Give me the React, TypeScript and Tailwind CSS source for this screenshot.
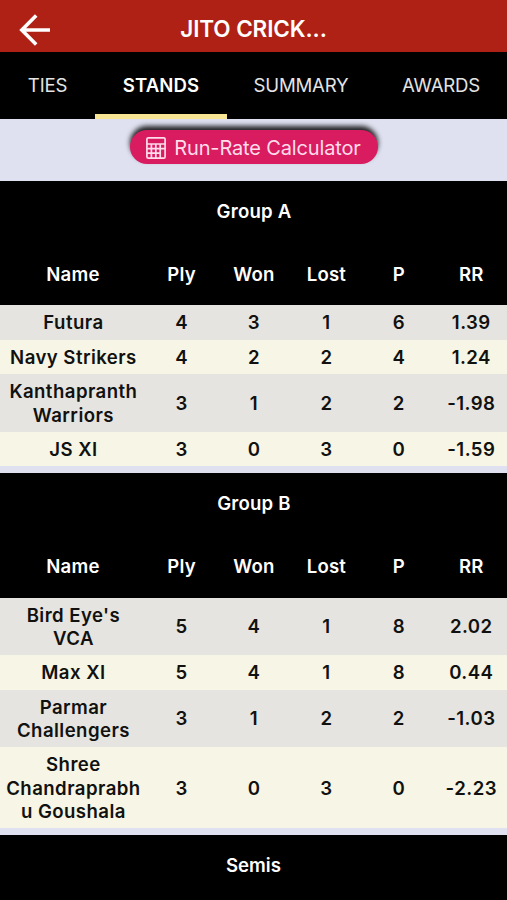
import clsx from 'clsx'

interface Team {
  name: string
  stats: string[]
}

interface Group {
  title: string
  teams: Team[]
}

const TABS = [
  { label: 'TIES', width: 'w-[95px]' },
  { label: 'STANDS', width: 'w-[132px]' },
  { label: 'SUMMARY', width: 'w-[148px]' },
  { label: 'AWARDS', width: 'w-[132px]' },
]

const COLUMNS = ['Name', 'Ply', 'Won', 'Lost', 'P', 'RR']

const GROUPS: Group[] = [
  {
    title: 'Group A',
    teams: [
      { name: 'Futura', stats: ['4', '3', '1', '6', '1.39'] },
      { name: 'Navy Strikers', stats: ['4', '2', '2', '4', '1.24'] },
      { name: 'Kanthapranth Warriors', stats: ['3', '1', '2', '2', '-1.98'] },
      { name: 'JS XI', stats: ['3', '0', '3', '0', '-1.59'] },
    ],
  },
  {
    title: 'Group B',
    teams: [
      { name: "Bird Eye's VCA", stats: ['5', '4', '1', '8', '2.02'] },
      { name: 'Max XI', stats: ['5', '4', '1', '8', '0.44'] },
      { name: 'Parmar Challengers', stats: ['3', '1', '2', '2', '-1.03'] },
      { name: 'Shree Chandraprabhu Goushala', stats: ['3', '0', '3', '0', '-2.23'] },
    ],
  },
]

function BackIcon() {
  return (
    <svg width="32" height="32" viewBox="0 0 32 32" fill="none" stroke="white" strokeWidth="3.6">
      <path d="M31 16H4M17.2 1.6L2.8 16l14.4 14.4" />
    </svg>
  )
}

function CalculatorIcon() {
  return (
    <svg width="20" height="22" viewBox="0 0 20 22" fill="none" stroke="currentColor" strokeWidth="1.7">
      <rect x="0.9" y="0.9" width="18.2" height="20.2" rx="1.4" />
      <path d="M1 7h18M1 11.6h18M1 16.2h13M5.4 7v14M9.8 7v14M14.2 7v14" />
    </svg>
  )
}

function GroupTable({ group }: { group: Group }) {
  return (
    <section className="mb-[6.9px]">
      <div className="bg-black text-white tracking-[0.2px]">
        <h2 className="h-[61px] pl-px leading-[61px] text-center">{group.title}</h2>
        <div className="grid grid-cols-[2fr_1fr_1fr_1fr_1fr_1fr] h-[63.4px] items-center pt-[1.5px] text-center">
          {COLUMNS.map(col => <div key={col} className="pl-px">{col}</div>)}
        </div>
      </div>
      {group.teams.map((team, i) => (
        <div key={team.name}
          className={clsx('grid grid-cols-[2fr_1fr_1fr_1fr_1fr_1fr] items-center pt-[6.1px] pb-[5.3px] text-center leading-[23.1px] tracking-[0.45px] text-[#11110f]', i % 2 ? 'bg-[#f7f5e5]' : 'bg-[#e5e4e0]')}>
          <div className="min-w-0 pl-[5px] pr-[3px] break-words">{team.name}</div>
          {team.stats.map((value, j) => <div key={j} className="pl-px">{value}</div>)}
        </div>
      ))}
    </section>
  )
}

export default function App() {
  return (
    <div className="h-[900px] overflow-hidden bg-[#dfe1f0] font-['Inter',sans-serif] text-[18.6px] font-semibold">
      <header className="grid grid-cols-[52px_1fr_52px] h-[52px] items-center bg-[#af2115] text-white">
        <button type="button" aria-label="Back" className="mt-2 ml-[19px]">
          <BackIcon />
        </button>
        <h1 className="mt-1.5 text-center text-[22.5px] tracking-[-0.1px]">JITO CRICK...</h1>
      </header>

      <nav className="flex h-[67px] bg-black">
        {TABS.map(tab => (
          <button type="button" key={tab.label}
            className={clsx('h-full border-b-[5px] pt-1.5 text-center', tab.width, tab.label === 'STANDS' ? 'border-[#f7e593] font-semibold text-white tracking-[0.1px]' : 'border-transparent font-normal text-[#e4e4e4] tracking-[-0.2px]')}>
            {tab.label}
          </button>
        ))}
      </nav>

      <div className="flex h-[62px] justify-center pt-[11px]">
        <button type="button"
          className="flex h-[34px] w-[248px] items-center justify-center gap-2 rounded-full bg-[#d91c60] pt-px text-[20px] font-normal tracking-[-0.15px] text-[#ffdcea] shadow-[0_-4px_5px_0px_rgba(0,0,0,0.85)]">
          <CalculatorIcon />
          Run-Rate Calculator
        </button>
      </div>

      {GROUPS.map(group => <GroupTable key={group.title} group={group} />)}

      <h2 className="h-[66px] bg-black text-center leading-[61px] text-white">Semis</h2>
    </div>
  )
}
